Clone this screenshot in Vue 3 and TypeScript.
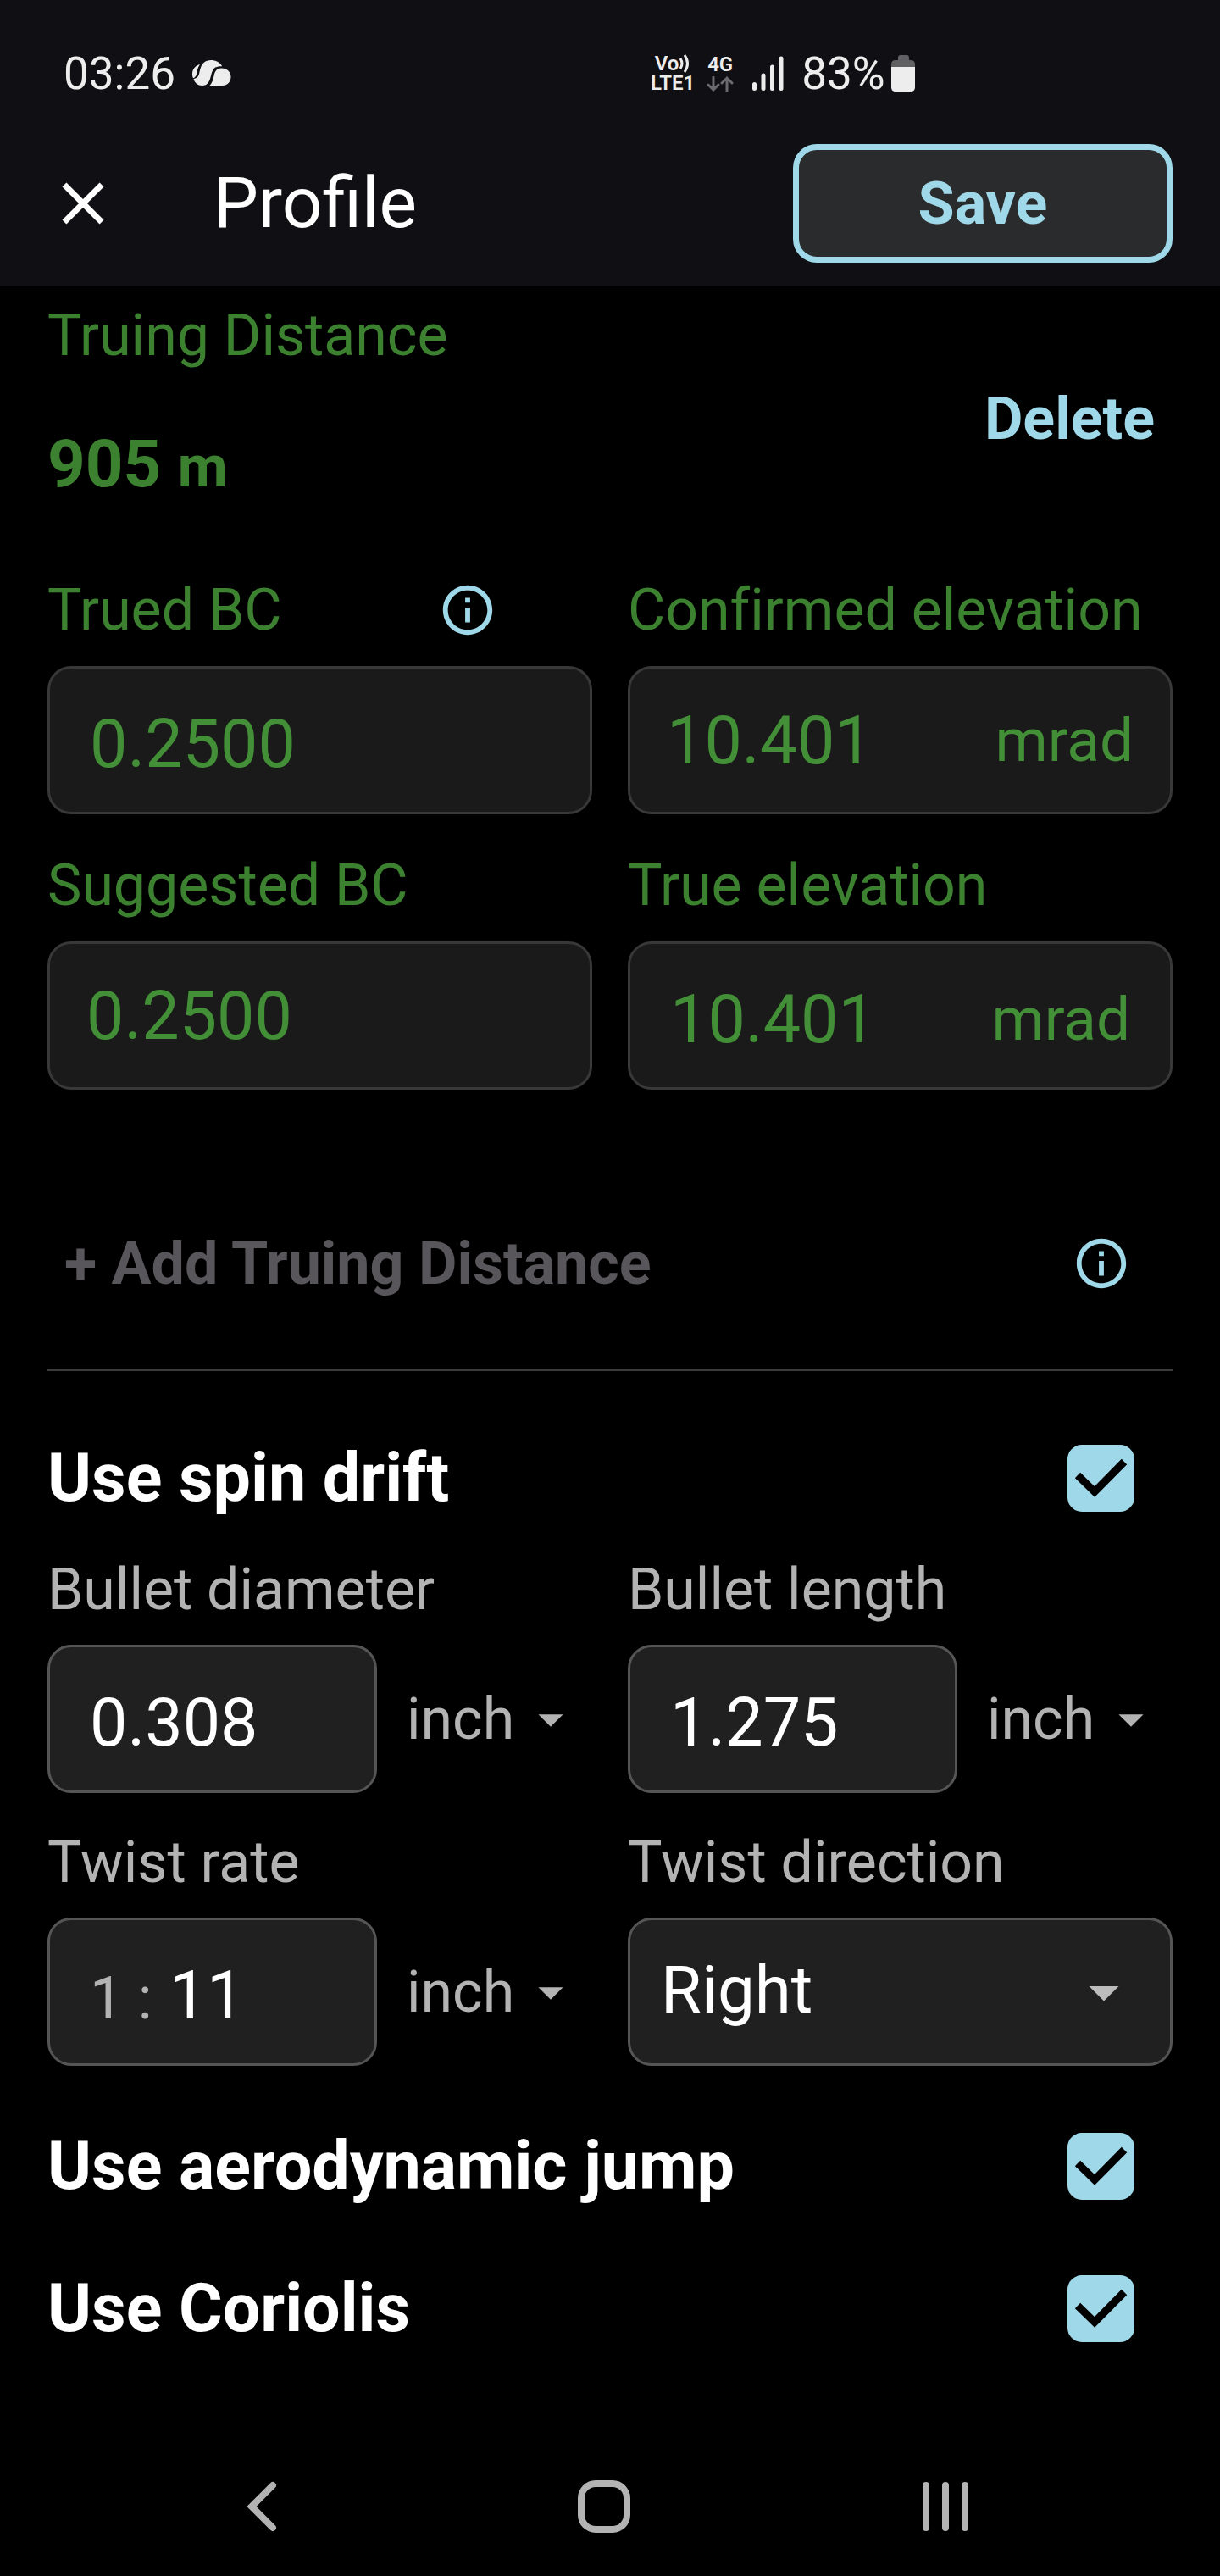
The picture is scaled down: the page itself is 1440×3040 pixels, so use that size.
<script setup lang="ts">
import { ref } from 'vue'

interface TruingField {
  id: string
  label: string
  value: string
  unit?: string
  info?: boolean
  inset?: boolean
}

const truingFields: TruingField[] = [
  { id: 'trued-bc', label: 'Trued BC', value: '0.2500', info: true, inset: true },
  { id: 'confirmed-elevation', label: 'Confirmed elevation', value: '10.401', unit: 'mrad' },
  { id: 'suggested-bc', label: 'Suggested BC', value: '0.2500' },
  { id: 'true-elevation', label: 'True elevation', value: '10.401', unit: 'mrad', inset: true },
]

const lengthUnits = ['inch', 'cm', 'mm']

const bulletDiameter = ref('0.308')
const bulletLength = ref('1.275')
const twistRate = ref('11')
const diameterUnit = ref('inch')
const bulletLengthUnit = ref('inch')
const twistUnit = ref('inch')
const twistDirection = ref('Right')
const useSpinDrift = ref(true)
const useAerodynamicJump = ref(true)
const useCoriolis = ref(true)
</script>

<template>
  <div class="screen">
    <header class="top">
      <div class="status">
        <div class="status-left">
          <span class="status-text">03:26</span>
          <svg class="cloud" viewBox="0 0 46 31" aria-hidden="true">
            <path d="M9 5C4 6 0 11 0 16c0 2 .3 3.800 1 5.200C3.500 20.500 4.600 18.500 5 16.500 5.600 12 6.500 8.500 9 5z" />
            <path d="M22 0C28 0 33 3 35.200 7.200 29 6.800 25.500 8.500 23.500 13.500 21.500 18.500 21.500 23.500 18.500 27 16.500 29.400 14 30 11.500 30 6.500 30 2.500 26.500 1.600 22 5.500 21.500 7.200 19.500 8.200 15.500 9.200 11 9.800 6.500 13.500 3 16 .8 19 0 22 0z" />
            <path d="M34.500 9.500C41 9.500 45.500 14 45.500 19.700 45.500 25.500 41.500 30 35.500 30H20.500C23.500 27 24.500 23 25.500 18.500 26.500 13.500 28.500 9.500 34.500 9.500z" />
          </svg>
        </div>
        <div class="status-right">
          <div class="volte">
            <span class="volte-top">
              <span>Vo</span>
              <svg class="waves" viewBox="0 0 14 24" aria-hidden="true">
                <path d="M2 6Q6 12 2 18M7 2Q14 12 7 22" />
              </svg>
            </span>
            <span>LTE1</span>
          </div>
          <div class="network">
            <span>4G</span>
            <svg class="traffic" viewBox="0 0 32 18" aria-hidden="true">
              <path d="M8 1V16M2 10L8 16L14 10M24 17V2M18 8L24 2L30 8" />
            </svg>
          </div>
          <svg class="signal" viewBox="0 0 38 42" aria-hidden="true">
            <path d="M3.500 33.500V38.500M14 23V38.500M24.500 13V38.500M35 3V38.500" />
          </svg>
          <span class="status-text">83%</span>
          <svg class="battery" viewBox="0 0 28 43" aria-hidden="true">
            <path class="battery-empty" d="M8 6V3Q8 0 11 0H18Q21 0 21 3V6H23Q28 6 28 11V14H0V11Q0 6 5 6z" />
            <path d="M0 14H28V38Q28 43 23 43H5Q0 43 0 38z" />
          </svg>
        </div>
      </div>

      <div class="app-bar">
        <button class="close" type="button" aria-label="Close">
          <svg viewBox="0 0 24 24" aria-hidden="true">
            <path d="M19 6.410L17.590 5 12 10.590 6.410 5 5 6.410 10.590 12 5 17.590 6.410 19 12 13.410 17.590 19 19 17.590 13.410 12z" />
          </svg>
        </button>
        <h1>Profile</h1>
        <button class="save" type="button">Save</button>
      </div>
    </header>

    <main>
      <section class="distance">
        <div class="distance-text">
          <p class="label green">Truing Distance</p>
          <p class="distance-value">905 <small>m</small></p>
        </div>
        <button class="text-button" type="button">Delete</button>
      </section>

      <section class="grid truing">
        <div v-for="f in truingFields" :key="f.id" class="cell">
          <div class="label-row">
            <label class="label green" :for="f.id">{{ f.label }}</label>
            <button v-if="f.info" class="info" type="button" aria-label="About trued BC">
              <svg viewBox="0 0 24 24" aria-hidden="true">
                <path d="M11 7h2v2h-2zm0 4h2v6h-2zm1-9C6.480 2 2 6.480 2 12s4.480 10 10 10 10-4.480 10-10S17.520 2 12 2zm0 18c-4.410 0-8-3.590-8-8s3.590-8 8-8 8 3.590 8 8-3.590 8-8 8z" />
              </svg>
            </button>
          </div>
          <div class="field readonly" :class="{ inset: f.inset }">
            <input :id="f.id" type="text" readonly :value="f.value" />
            <span v-if="f.unit" class="suffix">{{ f.unit }}</span>
          </div>
        </div>
      </section>

      <section class="add-row">
        <button class="text-button" type="button" disabled>+ Add Truing Distance</button>
        <button class="info" type="button" aria-label="About truing distances">
          <svg viewBox="0 0 24 24" aria-hidden="true">
            <path d="M11 7h2v2h-2zm0 4h2v6h-2zm1-9C6.480 2 2 6.480 2 12s4.480 10 10 10 10-4.480 10-10S17.520 2 12 2zm0 18c-4.410 0-8-3.590-8-8s3.590-8 8-8 8 3.590 8 8-3.590 8-8 8z" />
          </svg>
        </button>
      </section>

      <hr />

      <label class="toggle">
        <span>Use spin drift</span>
        <span class="check">
          <input v-model="useSpinDrift" type="checkbox" />
          <svg v-if="useSpinDrift" viewBox="0 0 79 79" aria-hidden="true"><path d="M12 36L32 55.500L67 20" /></svg>
        </span>
      </label>

      <section class="grid spin">
        <div class="cell">
          <label class="label" for="bullet-diameter">Bullet diameter</label>
          <div class="with-unit">
            <div class="field inset">
              <input id="bullet-diameter" v-model="bulletDiameter" type="text" inputmode="decimal" />
            </div>
            <div class="unit">
              <select v-model="diameterUnit" aria-label="Bullet diameter unit">
                <option v-for="u in lengthUnits" :key="u">{{ u }}</option>
              </select>
              <svg viewBox="0 0 24 24" aria-hidden="true"><path d="M7 10l5 5 5-5z" /></svg>
            </div>
          </div>
        </div>

        <div class="cell">
          <label class="label" for="bullet-length">Bullet length</label>
          <div class="with-unit">
            <div class="field inset">
              <input id="bullet-length" v-model="bulletLength" type="text" inputmode="decimal" />
            </div>
            <div class="unit">
              <select v-model="bulletLengthUnit" aria-label="Bullet length unit">
                <option v-for="u in lengthUnits" :key="u">{{ u }}</option>
              </select>
              <svg viewBox="0 0 24 24" aria-hidden="true"><path d="M7 10l5 5 5-5z" /></svg>
            </div>
          </div>
        </div>

        <div class="cell">
          <label class="label" for="twist-rate">Twist rate</label>
          <div class="with-unit">
            <div class="field inset">
              <div class="ratio">
                <span class="prefix">1 :</span>
                <input id="twist-rate" v-model="twistRate" type="text" inputmode="decimal" />
              </div>
            </div>
            <div class="unit">
              <select v-model="twistUnit" aria-label="Twist rate unit">
                <option v-for="u in lengthUnits" :key="u">{{ u }}</option>
              </select>
              <svg viewBox="0 0 24 24" aria-hidden="true"><path d="M7 10l5 5 5-5z" /></svg>
            </div>
          </div>
        </div>

        <div class="cell">
          <label class="label" for="twist-direction">Twist direction</label>
          <div class="dropdown">
            <select id="twist-direction" v-model="twistDirection">
              <option>Right</option>
              <option>Left</option>
            </select>
            <svg viewBox="0 0 24 24" aria-hidden="true"><path d="M7 10l5 5 5-5z" /></svg>
          </div>
        </div>
      </section>

      <section class="effects">
        <label class="toggle">
          <span>Use aerodynamic jump</span>
          <span class="check">
            <input v-model="useAerodynamicJump" type="checkbox" />
            <svg v-if="useAerodynamicJump" viewBox="0 0 79 79" aria-hidden="true"><path d="M12 36L32 55.500L67 20" /></svg>
          </span>
        </label>
        <label class="toggle">
          <span>Use Coriolis</span>
          <span class="check">
            <input v-model="useCoriolis" type="checkbox" />
            <svg v-if="useCoriolis" viewBox="0 0 79 79" aria-hidden="true"><path d="M12 36L32 55.500L67 20" /></svg>
          </span>
        </label>
      </section>
    </main>

    <nav class="system-nav" aria-label="System">
      <button type="button" aria-label="Back">
        <svg viewBox="0 0 64 64" aria-hidden="true"><path d="M44 7L19 32L44 57" /></svg>
      </button>
      <button type="button" aria-label="Home">
        <svg viewBox="0 0 64 64" aria-hidden="true"><rect x="5" y="5" width="54" height="54" rx="17" /></svg>
      </button>
      <button type="button" aria-label="Recent apps">
        <svg viewBox="0 0 64 64" aria-hidden="true"><path d="M9 7V57M32 7V57M55 7V57" /></svg>
      </button>
    </nav>
  </div>
</template>

<style>
body {
  margin: 0;
  background: #000;
}
</style>

<style scoped>
.screen {
  --accent: #9fd8e8;
  --green: #3c812f;
  --green-value: #438f37;
  --grey: #b3b3b3;
  display: flex;
  flex-direction: column;
  min-height: 100vh;
  background: #000;
  color: #fff;
  font-family: Roboto, "Noto Sans", sans-serif;
  font-variant-ligatures: none;
}

.screen *,
.screen *::before {
  box-sizing: border-box;
}

h1,
p {
  margin: 0;
}

svg {
  display: block;
  fill: currentColor;
}

button,
input,
select {
  margin: 0;
  padding: 0;
  border: 0;
  outline: 0;
  border-radius: 0;
  background: none;
  color: inherit;
  font: inherit;
  appearance: none;
}

.top {
  padding-bottom: 28px;
  background: #101014;
}

/* System status bar */
.status {
  display: grid;
  grid-template-columns: 8fr 7fr;
  align-items: center;
  height: 170px;
  padding-top: 3px;
  color: #ededed;
}

.status-left,
.status-right {
  display: flex;
  align-items: center;
}

.status-left {
  gap: 20px;
  padding-left: 75px;
}

.status-text {
  font-size: 53px;
  line-height: 60px;
}

.cloud {
  width: 46px;
  height: 31px;
}

.volte,
.network {
  display: flex;
  flex-direction: column;
  align-items: center;
  font-size: 24px;
  font-weight: 600;
  line-height: 23px;
}

.volte-top {
  display: flex;
  align-items: center;
}

.waves {
  width: 14px;
  height: 24px;
  fill: none;
  stroke: currentColor;
  stroke-width: 3;
}

.network {
  gap: 2px;
  margin-left: 14px;
}

.traffic {
  width: 32px;
  height: 18px;
  fill: none;
  stroke: #6b6b6d;
  stroke-width: 3;
  stroke-linecap: round;
}

.signal {
  width: 38px;
  height: 42px;
  margin: 0 21px;
  fill: none;
  stroke: currentColor;
  stroke-width: 5;
  stroke-linecap: round;
}

.battery {
  width: 28px;
  height: 43px;
  margin-left: 7px;
}

.battery-empty {
  fill: #606062;
}

/* App bar */
.app-bar {
  display: flex;
  align-items: center;
  height: 140px;
  padding: 0 56px;
}

.close svg {
  width: 84px;
  height: 84px;
}

h1 {
  flex: 1;
  padding-left: 112px;
  font-size: 84px;
  font-weight: 400;
  line-height: 96px;
  font-variant-ligatures: normal;
}

.save {
  width: 448px;
  height: 140px;
  border: 7px solid var(--accent);
  border-radius: 28px;
  background: #2a2b2c;
  color: var(--accent);
  font-size: 70px;
  font-weight: 700;
}

/* Form */
main {
  flex: 1;
  padding: 18px 56px 104px;
}

.label {
  color: var(--grey);
  font-size: 68px;
  line-height: 80px;
  white-space: nowrap;
}

.green {
  color: var(--green);
}

.distance {
  display: flex;
  justify-content: space-between;
  align-items: center;
  padding-right: 21px;
}

.distance-text {
  padding-bottom: 35px;
}

.distance-value {
  margin-top: 64px;
  color: var(--green);
  font-size: 78px;
  font-weight: 700;
  line-height: 96px;
}

.distance-value small {
  font-size: 68px;
  line-height: 1;
}

.text-button {
  color: var(--accent);
  font-size: 70px;
  font-weight: 700;
  line-height: 80px;
}

.text-button:disabled {
  color: #58565b;
}

.grid {
  display: grid;
  grid-template-columns: repeat(2, minmax(0, 1fr));
  column-gap: 42px;
}

.truing {
  row-gap: 44px;
  margin-top: 49px;
}

.spin {
  row-gap: 42px;
  margin-top: 44px;
}

.cell {
  display: flex;
  flex-direction: column;
  gap: 26px;
}

.spin .cell {
  gap: 25px;
}

.label-row {
  display: flex;
  justify-content: space-between;
  align-items: center;
  padding-right: 112px;
}

.info {
  color: var(--accent);
}

.info svg {
  width: 70px;
  height: 70px;
}

.field,
.dropdown {
  height: 175px;
  border: 3px solid #555;
  border-radius: 28px;
  background: #202020;
  font-size: 79px;
}

.field {
  display: flex;
  flex: 1;
  align-items: center;
  min-width: 0;
  padding: 0 43px;
}

.field.inset {
  padding: 8px 47px 0;
}

.field.readonly {
  flex: none;
  border-color: #383838;
  background: #1a1a1a;
  color: var(--green-value);
}

.field input {
  flex: 1;
  width: 100%;
  min-width: 0;
  height: 96px;
  line-height: 96px;
}

.suffix {
  font-size: 71px;
  line-height: 80px;
}

.ratio {
  display: flex;
  flex: 1;
  align-items: baseline;
  gap: 20px;
  min-width: 0;
}

.prefix {
  color: var(--grey);
  font-size: 70px;
  line-height: 80px;
  white-space: nowrap;
}

.with-unit {
  display: flex;
  align-items: center;
  gap: 35px;
  padding-right: 14px;
}

.unit,
.dropdown {
  display: grid;
  align-items: center;
}

.unit {
  width: 205px;
  color: var(--grey);
  font-size: 68px;
}

.unit select,
.unit svg,
.dropdown select,
.dropdown svg {
  grid-area: 1 / 1;
}

.unit svg,
.dropdown svg {
  justify-self: end;
  pointer-events: none;
}

.unit select {
  width: 100%;
  height: 80px;
  line-height: 80px;
}

.unit svg {
  width: 70px;
  height: 70px;
}

.dropdown {
  padding: 0 36px;
  font-size: 78px;
}

.dropdown select {
  width: 100%;
  height: 96px;
  padding-bottom: 4px;
}

.dropdown svg {
  width: 84px;
  height: 84px;
  color: #bcbcbc;
}

.add-row {
  display: flex;
  justify-content: space-between;
  align-items: center;
  margin-top: 165px;
  padding: 0 49px 0 20px;
}

hr {
  height: 3px;
  margin: 84px 0 78px;
  border: 0;
  background: #3c3c3c;
}

.toggle {
  display: flex;
  justify-content: space-between;
  align-items: center;
  padding-right: 45px;
  font-size: 79px;
  font-weight: 700;
  line-height: 96px;
}

.check {
  display: grid;
}

.check input,
.check svg {
  grid-area: 1 / 1;
  width: 79px;
  height: 79px;
}

.check input {
  border: 3px solid var(--grey);
  border-radius: 17px;
}

.check input:checked {
  border-color: var(--accent);
  background: var(--accent);
}

.check svg {
  fill: none;
  stroke: #000;
  stroke-width: 9;
  pointer-events: none;
}

.effects {
  display: flex;
  flex-direction: column;
  gap: 72px;
  margin-top: 70px;
}

/* System navigation */
.system-nav {
  display: grid;
  grid-template-columns: repeat(3, 1fr);
  align-items: center;
  height: 164px;
  padding: 0 122px 0 108px;
  color: var(--grey);
}

.system-nav button {
  display: grid;
  place-items: center;
}

.system-nav svg {
  width: 64px;
  height: 64px;
  fill: none;
  stroke: currentColor;
  stroke-width: 8;
  stroke-linecap: round;
}
</style>
